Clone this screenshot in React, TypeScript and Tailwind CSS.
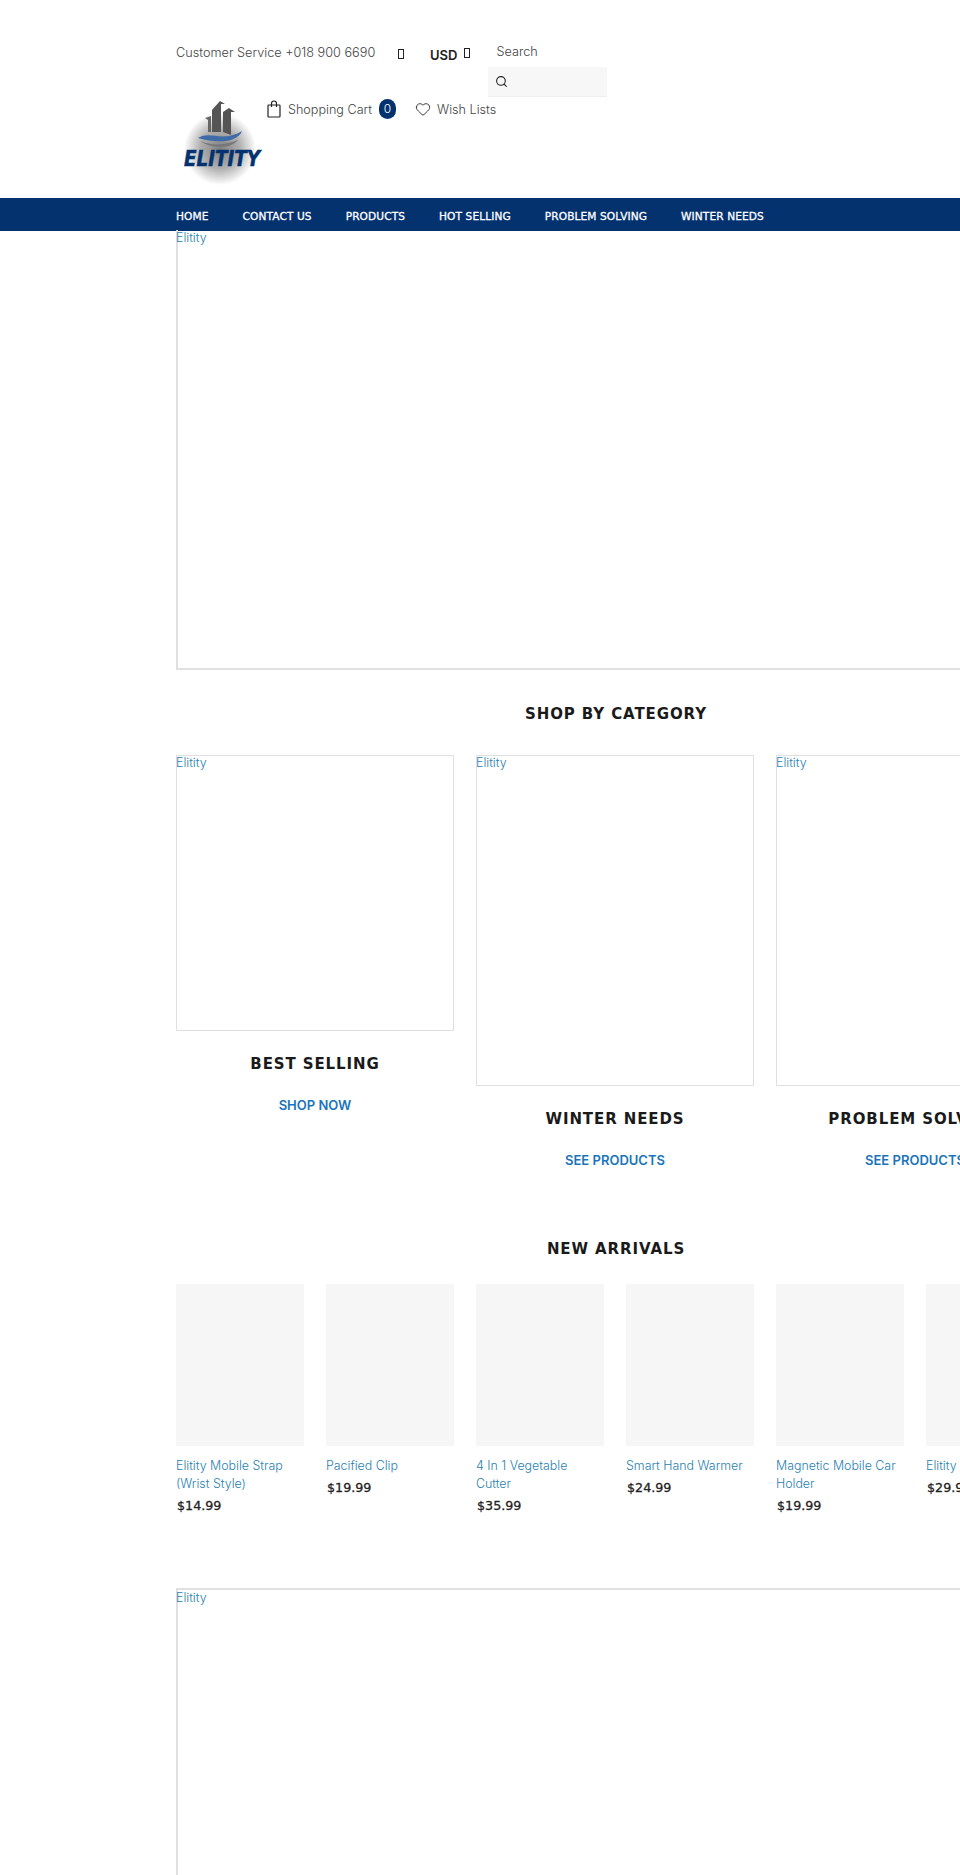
import { Heart, Search } from 'lucide-react';

const body = "font-['Inter','Liberation_Sans',sans-serif]";
const heading = "font-['DejaVu_Sans',sans-serif]";

const navLinks = ['HOME', 'CONTACT US', 'PRODUCTS', 'HOT SELLING', 'PROBLEM SOLVING', 'WINTER NEEDS'];

const categories = [
  { title: 'BEST SELLING', link: 'SHOP NOW', height: 'h-[276px]' },
  { title: 'WINTER NEEDS', link: 'SEE PRODUCTS', height: 'h-[331px]' },
  { title: 'PROBLEM SOLVING', link: 'SEE PRODUCTS', height: 'h-[331px]' },
];

const products = [
  { name: 'Elitity Mobile Strap (Wrist Style)', price: '$14.99' },
  { name: 'Pacified Clip', price: '$19.99' },
  { name: '4 In 1 Vegetable Cutter', price: '$35.99' },
  { name: 'Smart Hand Warmer', price: '$24.99' },
  { name: 'Magnetic Mobile Car Holder', price: '$19.99' },
  { name: 'Elitity Printed Case', price: '$29.99' },
];

function Tofu() {
  return <span className="block h-[10px] w-[6px] border border-[#222]" />;
}

function BrokenImage({ className, inset }: { className: string; inset: string }) {
  return (
    <div className={className}>
      <span className={`${inset} block ${body} text-[12.4px] font-light leading-[16px] text-[#2a7fb0]`}>Elitity</span>
    </div>
  );
}

function BagIcon() {
  return (
    <svg width="14" height="18" viewBox="0 0 14 18" fill="none" stroke="#222" strokeWidth="1.2" className="shrink-0">
      <rect x="1" y="5" width="12" height="12" rx="0.8" />
      <path d="M4.5 7V3.5a2.5 2.5 0 0 1 5 0V7" />
    </svg>
  );
}

function Logo() {
  return (
    <svg width="92" height="92" viewBox="0 0 92 92" className="shrink-0">
      <defs>
        <radialGradient id="glow" cx="50%" cy="50%" r="50%">
          <stop offset="0%" stopColor="#808080" />
          <stop offset="55%" stopColor="#b0b0b0" />
          <stop offset="100%" stopColor="#fff" />
        </radialGradient>
      </defs>
      <circle cx="44" cy="52" r="36" fill="url(#glow)" />
      <path d="M36 13 L44 4 L49 7 L45 7 L45 35 L36 35 Z" fill="#555" />
      <path d="M47 35 L47 15 L53 11 L59 15 L55 15 L55 38 Z" fill="#555" />
      <path d="M29 21 L35 19 L35 35 L32 35 L32 23 Z" fill="#666" />
      <path d="M22 41 C34 33 46 46 66 34 C62 45 42 47 22 41 Z" fill="#3f6ca8" />
      <path d="M24 44 C38 50 52 47 62 43 C54 53 34 51 24 44 Z" fill="#777" />
      <text x="46" y="69" textAnchor="middle" fontFamily="'DejaVu Sans',sans-serif" fontSize="22" fontWeight="700" fontStyle="italic" fill="#03326f" stroke="#03326f" strokeWidth="0.6" textLength="76" lengthAdjust="spacingAndGlyphs">ELITITY</text>
    </svg>
  );
}

export default function App() {
  return (
    <div className={`h-[1875px] w-[960px] overflow-hidden bg-white ${body}`}>
      <header className="h-[198px] pl-[176px] pt-[40px]">
        <div className="flex h-[57px] items-start text-[#444]">
          <span className="mt-[3px] w-[200px] whitespace-nowrap text-[12.7px] font-light leading-[20px]">Customer Service +018 900 6690</span>
          <span className="ml-[22px] mt-[9px]"><Tofu /></span>
          <span className="ml-[26px] mt-[5px] text-[13px] font-semibold leading-[20px] text-[#222]">USD</span>
          <span className="ml-[7px] mt-[8px]"><Tofu /></span>
          <div className="ml-[18px] w-[119px]">
            <span className="ml-[8px] mt-[2px] block text-[12.7px] font-light leading-[20px]">Search</span>
            <div className="mt-[5px] flex h-[30px] items-center border-b border-[#eee] bg-[#f7f7f7] pl-[7px]">
              <Search className="h-[13px] w-[13px] text-[#222]" strokeWidth={2} />
            </div>
          </div>
        </div>
        <div className="flex items-start">
          <Logo />
          <div className="-ml-[1px] flex items-center pt-[2px] text-[12.6px] font-light text-[#444]">
            <BagIcon />
            <span className="ml-[7px] mt-[2px] w-[84px] whitespace-nowrap">Shopping Cart</span>
            <span className="ml-[7px] flex h-[20px] w-[17px] items-center justify-center rounded-full bg-[#03326f] text-[12px] text-white">0</span>
            <Heart className="ml-[19px] h-[16px] w-[16px] text-[#222]" strokeWidth={1.3} />
            <span className="ml-[6px] mt-[1px] whitespace-nowrap">Wish Lists</span>
          </div>
        </div>
      </header>

      <nav className={`flex h-[33px] items-center gap-[34px] bg-[#03326f] pl-[176px] pt-[4px] ${heading} text-[10.6px] tracking-[0.1px] text-white [-webkit-text-stroke:0.3px_white]`}>
        {navLinks.map((link) => (
          <a key={link} className="whitespace-nowrap">{link}</a>
        ))}
      </nav>

      <main className="w-[1056px] pl-[176px]">
        <BrokenImage className="h-[440px] w-[880px] border-b-2 border-l-2 border-[#e0e0e0]" inset="-ml-[2px] -mt-px" />

        <h2 className={`mt-[34px] text-center ${heading} text-[15px] font-bold leading-[20px] tracking-[0.9px] text-[#1a1a1a]`}>SHOP BY CATEGORY</h2>

        <div className="mt-[31px] flex items-start gap-[22px]">
          {categories.map((cat) => (
            <div key={cat.title} className="w-[278px] shrink-0 text-center">
              <BrokenImage className={`${cat.height} border border-[#e0e0e0] text-left`} inset="-ml-px -mt-px" />
              <h3 className={`mt-[23px] ${heading} whitespace-nowrap text-[15px] font-bold leading-[20px] tracking-[0.9px] text-[#1a1a1a]`}>{cat.title}</h3>
              <a className="mt-[21px] block whitespace-nowrap text-[13px] font-semibold leading-[20px] text-[#1a75bb]">{cat.link}</a>
            </div>
          ))}
        </div>

        <h2 className={`mt-[69px] text-center ${heading} text-[15px] font-bold leading-[20px] tracking-[0.9px] text-[#1a1a1a]`}>NEW ARRIVALS</h2>

        <div className="mt-[25px] flex h-[304px] items-start gap-[22px]">
          {products.map((p) => (
            <div key={p.name} className="w-[128px] shrink-0">
              <div className="h-[162px] bg-[#f6f6f6]" />
              <p className="mt-[11px] text-[12.4px] font-light leading-[18px] text-[#2a7fb0]">{p.name}</p>
              <p className={`ml-px mt-[4px] ${heading} text-[12.7px] leading-[18px] text-[#222] [-webkit-text-stroke:0.3px_#222]`}>{p.price}</p>
            </div>
          ))}
        </div>

        <BrokenImage className="h-[440px] w-[880px] border-l-2 border-t-2 border-[#e0e0e0]" inset="-ml-[2px]" />
      </main>
    </div>
  );
}
